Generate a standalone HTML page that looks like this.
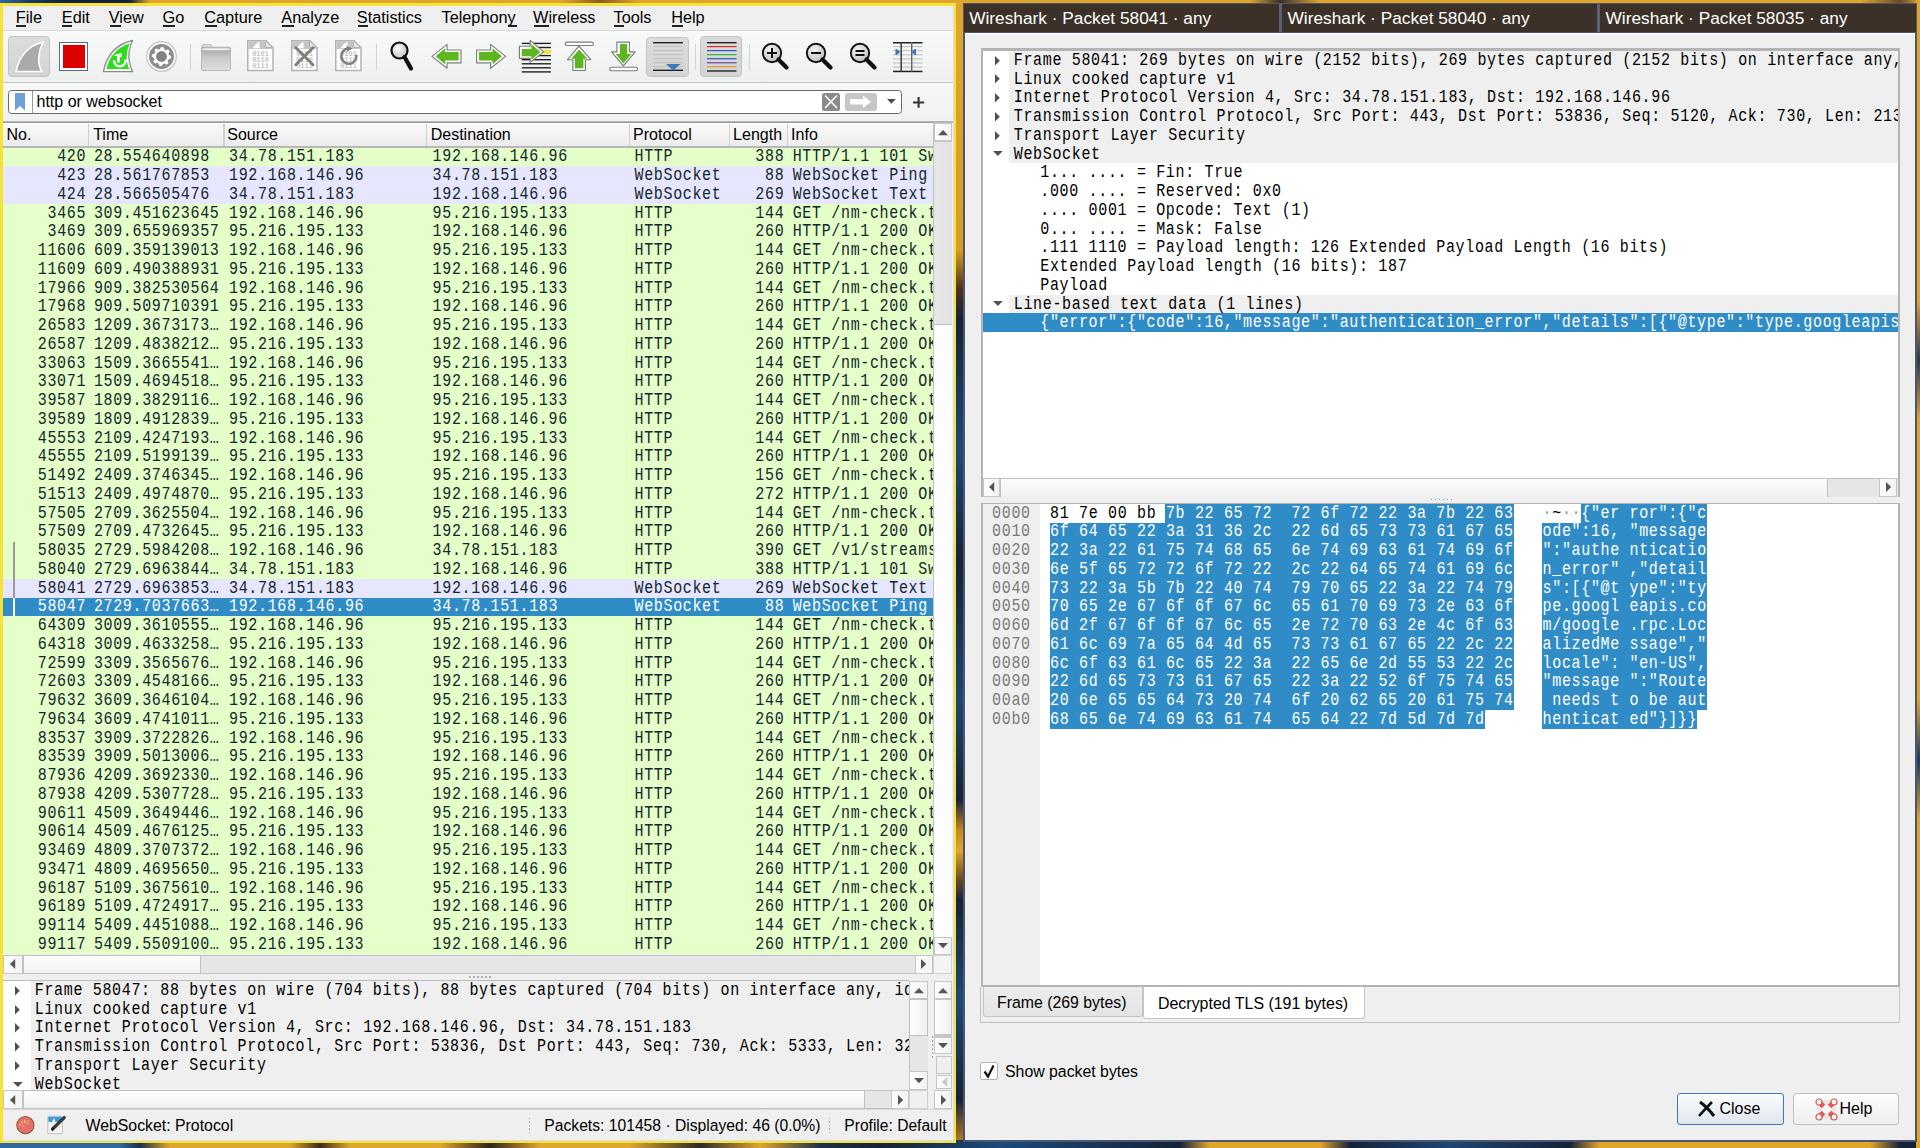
<!DOCTYPE html><html><head><meta charset="utf-8"><style>
*{margin:0;padding:0;box-sizing:border-box}
html,body{width:1920px;height:1148px;overflow:hidden}
body{position:relative;background:#1a2a44}
div{position:absolute}
.m{font-family:"Liberation Mono",monospace;font-size:15px;letter-spacing:0.657px;line-height:18.75px;height:18.75px;white-space:pre;color:#000;transform:scaleY(1.2);transform-origin:0 0}
.s{font-family:"Liberation Sans",sans-serif;font-size:16px;line-height:20px;height:20px;white-space:pre;color:#000}
</style></head><body><div style="left:0px;top:0px;width:1920px;height:1148px;background:#16223a"></div><div style="left:0px;top:0px;width:1920px;height:4px;background:linear-gradient(90deg,#2f6aa6 0px,#1b3c66 28px,#16223a 60px,#16223a 130px,#e0a62c 150px,#e0a62c 560px,#8a5a20 600px,#e0a62c 640px,#e0a62c 1250px,#3a3024 1280px,#e0a62c 1320px,#e0a62c 1860px,#6a4a20 1900px,#e0a62c 1920px)"></div><div style="left:953px;top:0px;width:12px;height:1148px;background:linear-gradient(180deg,#e0a62c 0px,#d89a26 250px,#4a3018 290px,#16223a 320px,#1d4a78 450px,#16223a 560px,#1e4670 700px,#16223a 800px,#c8841e 830px,#e0a62c 850px,#6a4a20 880px,#16223a 900px,#1c4a76 1000px,#16223a 1100px,#b07a20 1140px)"></div><div style="left:0px;top:1140px;width:1920px;height:8px;background:linear-gradient(90deg,#2f6aa6 0px,#2f6aa6 120px,#1b3050 140px,#e0a62c 170px,#e0a62c 290px,#3a2c1c 320px,#e0a62c 350px,#e0a62c 440px,#2a2420 490px,#e0a62c 540px,#e0a62c 630px,#2a2a2a 700px,#e0a62c 760px,#1c3050 820px,#16223a 880px,#1d4a78 1000px,#16223a 1180px,#e0a62c 1210px,#e0a62c 1320px,#16223a 1350px,#1e4670 1450px,#16223a 1570px,#e0a62c 1600px,#e0a62c 1870px,#16223a 1900px)"></div><div style="left:1916px;top:0px;width:4px;height:1148px;background:linear-gradient(180deg,#e0a62c 0px,#e0a62c 300px,#2a3a50 360px,#e0a62c 420px,#e0a62c 700px,#1c3a60 760px,#e0a62c 820px,#e0a62c 1148px)"></div><div style="left:0px;top:3px;width:956px;height:1140px;background:#f4e43a"></div><div style="left:2.5px;top:5.5px;width:951px;height:1135px;background:#dcdcec"></div><div style="left:3px;top:6px;width:950px;height:1134px;overflow:hidden;background:#efefef"><div class="s" style="left:12.8px;top:0.6px;font-size:16.3px">File</div><div class="s" style="left:58.8px;top:0.6px;font-size:16.3px">Edit</div><div class="s" style="left:105.8px;top:0.6px;font-size:16.3px">View</div><div class="s" style="left:159.55px;top:0.6px;font-size:16.3px">Go</div><div class="s" style="left:201.3px;top:0.6px;font-size:16.3px">Capture</div><div class="s" style="left:278.3px;top:0.6px;font-size:16.3px">Analyze</div><div class="s" style="left:353.8px;top:0.6px;font-size:16.3px">Statistics</div><div class="s" style="left:438.5px;top:0.6px;font-size:16.3px">Telephony</div><div class="s" style="left:530.1px;top:0.6px;font-size:16.3px">Wireless</div><div class="s" style="left:610.5px;top:0.6px;font-size:16.3px">Tools</div><div class="s" style="left:668.2px;top:0.6px;font-size:16.3px">Help</div><div style="left:0px;top:24px;width:950px;height:1px;background:#d9d9d9"></div><div style="left:12.9px;top:19.4px;width:9.7px;height:1.4px;background:#222"></div><div style="left:58.6px;top:19.4px;width:10.9px;height:1.4px;background:#222"></div><div style="left:106.5px;top:19.4px;width:11px;height:1.4px;background:#222"></div><div style="left:160px;top:19.4px;width:12.4px;height:1.4px;background:#222"></div><div style="left:202px;top:19.4px;width:11.5px;height:1.4px;background:#222"></div><div style="left:279px;top:19.4px;width:11.5px;height:1.4px;background:#222"></div><div style="left:354.5px;top:19.4px;width:10.5px;height:1.4px;background:#222"></div><div style="left:505px;top:19.4px;width:8.5px;height:1.4px;background:#222"></div><div style="left:530.5px;top:19.4px;width:15px;height:1.4px;background:#222"></div><div style="left:611px;top:19.4px;width:10px;height:1.4px;background:#222"></div><div style="left:668.5px;top:19.4px;width:11.5px;height:1.4px;background:#222"></div><div style="left:0px;top:25px;width:950px;height:51px;background:linear-gradient(#f8f9f9,#eef0f0)"></div><div style="left:0px;top:76px;width:950px;height:1px;background:#c6c6c6"></div><div style="left:5.3px;top:30.3px;width:42.2px;height:40.7px;background:linear-gradient(#dcdcdc,#d4d4d4);border:1px solid #c2c2c2;border-radius:4px"></div><div style="left:643.3px;top:30.7px;width:42.4px;height:40.7px;background:linear-gradient(#dcdcdc,#d4d4d4);border:1px solid #c2c2c2;border-radius:4px"></div><div style="left:697.2px;top:30.4px;width:42.3px;height:41px;background:linear-gradient(#dcdcdc,#d4d4d4);border:1px solid #c2c2c2;border-radius:4px"></div><div style="left:187px;top:38px;width:1px;height:26px;background:#d2d2d2"></div><div style="left:373px;top:38px;width:1px;height:26px;background:#d2d2d2"></div><div style="left:692px;top:38px;width:1px;height:26px;background:#d2d2d2"></div><div style="left:745.9px;top:38px;width:1px;height:26px;background:#d2d2d2"></div><svg style="position:absolute;left:12px;top:34.5px;overflow:visible;" width="30" height="32" viewBox="0 0 30 32"><path d="M1,30.5 C4,16 13,5 28,1 C23,11 22,23 27,30.5 Z" fill="#aaaaaa" stroke="#ffffff" stroke-width="1.6"/></svg><div style="left:56px;top:36px;width:29px;height:28.7px;background:#fff;border:1.2px solid #5e6c80"></div><div style="left:59.5px;top:39.2px;width:22.4px;height:22.4px;background:#dd0000"></div><svg style="position:absolute;left:95px;top:30px;overflow:visible;" width="40" height="40" viewBox="0 0 40 40"><path d="M5.5,35.6 C8,20 18,8 34.6,4.5 C31,11 30,20 31.5,26 C32,30 33.5,33 34.6,35.6 Z" fill="#fff" stroke="#8a8a8a" stroke-width="1.3" stroke-linejoin="round"/><path d="M8.5,33 C11,21 19,11 32,7.3 C28.5,14 28,22 29.5,28 C30,30 30.5,31.5 31.5,33 Z" fill="#2ddc1a"/><path d="M16,24.5 A5.8,5.8 0 1 0 27.5,23.5" fill="none" stroke="#fff" stroke-width="2.4"/><path d="M20.4,18.5 L20.4,26.5" stroke="#fff" stroke-width="2.8"/><polygon points="15.2,19.2 23.6,16.8 23.6,21.2" fill="#fff"/></svg><svg style="position:absolute;left:143.3px;top:34.5px;overflow:visible;" width="31" height="31" viewBox="0 0 31 31"><circle cx="15.5" cy="15.5" r="14.8" fill="#f8f8f8" stroke="#c4c4c4" stroke-width="1.2"/><circle cx="15.5" cy="15.5" r="12.4" fill="#8c8c8c"/><polygon points="15.50,6.10 17.33,6.28 18.29,8.76 19.56,9.43 22.15,8.85 23.32,10.28 22.24,12.71 22.66,14.08 24.90,15.50 24.72,17.33 22.24,18.29 21.57,19.56 22.15,22.15 20.72,23.32 18.29,22.24 16.92,22.66 15.50,24.90 13.67,24.72 12.71,22.24 11.44,21.57 8.85,22.15 7.68,20.72 8.76,18.29 8.34,16.92 6.10,15.50 6.28,13.67 8.76,12.71 9.43,11.44 8.85,8.85 10.28,7.68 12.71,8.76 14.08,8.34" fill="#ffffff" stroke="#ffffff" stroke-width="0.6" stroke-linejoin="round"/><circle cx="15.5" cy="15.5" r="5.4" fill="#828282"/></svg><svg style="position:absolute;left:198px;top:38px;overflow:visible;" width="30" height="27" viewBox="0 0 30 27"><defs><linearGradient id="fg" x1="0" y1="0" x2="0" y2="1"><stop offset="0" stop-color="#a6a6a6"/><stop offset="0.55" stop-color="#cfcfcf"/><stop offset="1" stop-color="#dedede"/></linearGradient></defs><path d="M1,3.5 L1,1.5 Q1,0.5 2,0.5 L10,0.5 L11,2.5 L11,3.5 Z" fill="#dcdcdc" stroke="#bdbdbd" stroke-width="1"/><rect x="0.5" y="3.2" width="29" height="23.3" rx="1" fill="url(#fg)" stroke="#b8b8b8" stroke-width="1"/><rect x="1.5" y="4.2" width="27" height="2" fill="#eeeeee"/></svg><svg style="position:absolute;left:243.9px;top:34.4px;overflow:visible;" width="27" height="32" viewBox="0 0 27 32"><path d="M0.75,0.75 L19,0.75 L26,7.5 L26,30.6 L0.75,30.6 Z" fill="#fff" stroke="#b2b2b2" stroke-width="1.5"/><path d="M1.5,1.5 L18.5,1.5 L25,7.5 L25,9 L1.5,9 Z" fill="#c4c4c4"/><path d="M18.5,1.5 L18.5,7.5 L25,7.5" fill="#e6e6e6" stroke="#b2b2b2" stroke-width="1"/><path d="M6,8.2 C7.5,5 9.5,3 12.6,2 L12.6,8.2 Z" fill="#fff"/><text x="5.2" y="16.3" font-family="Liberation Mono" font-size="6.6" font-weight="bold" fill="#c4c4c4" textLength="16.6" lengthAdjust="spacingAndGlyphs" transform="scale(1,1)">0101</text><text x="5.2" y="22.2" font-family="Liberation Mono" font-size="6.6" font-weight="bold" fill="#c4c4c4" textLength="16.6" lengthAdjust="spacingAndGlyphs" transform="scale(1,1)">0110</text><text x="5.2" y="28" font-family="Liberation Mono" font-size="6.6" font-weight="bold" fill="#c4c4c4" textLength="16.6" lengthAdjust="spacingAndGlyphs" transform="scale(1,1)">0111</text></svg><svg style="position:absolute;left:288px;top:34.4px;overflow:visible;" width="27" height="32" viewBox="0 0 27 32"><path d="M0.75,0.75 L19,0.75 L26,7.5 L26,30.6 L0.75,30.6 Z" fill="#fff" stroke="#b2b2b2" stroke-width="1.5"/><path d="M1.5,1.5 L18.5,1.5 L25,7.5 L25,9 L1.5,9 Z" fill="#c4c4c4"/><path d="M18.5,1.5 L18.5,7.5 L25,7.5" fill="#e6e6e6" stroke="#b2b2b2" stroke-width="1"/><path d="M6,8.2 C7.5,5 9.5,3 12.6,2 L12.6,8.2 Z" fill="#fff"/><text x="5.2" y="16.3" font-family="Liberation Mono" font-size="6.6" font-weight="bold" fill="#c4c4c4" textLength="16.6" lengthAdjust="spacingAndGlyphs" transform="scale(1,1)">0101</text><text x="5.2" y="22.2" font-family="Liberation Mono" font-size="6.6" font-weight="bold" fill="#c4c4c4" textLength="16.6" lengthAdjust="spacingAndGlyphs" transform="scale(1,1)">0110</text><text x="5.2" y="28" font-family="Liberation Mono" font-size="6.6" font-weight="bold" fill="#c4c4c4" textLength="16.6" lengthAdjust="spacingAndGlyphs" transform="scale(1,1)">0111</text><path d="M4.8,7.8 L22,24.8 M22,7.8 L4.8,24.8" stroke="#7c807a" stroke-width="2.9" stroke-linecap="round"/></svg><svg style="position:absolute;left:332px;top:34.4px;overflow:visible;" width="27" height="32" viewBox="0 0 27 32"><path d="M0.75,0.75 L19,0.75 L26,7.5 L26,30.6 L0.75,30.6 Z" fill="#fff" stroke="#b2b2b2" stroke-width="1.5"/><path d="M1.5,1.5 L18.5,1.5 L25,7.5 L25,9 L1.5,9 Z" fill="#c4c4c4"/><path d="M18.5,1.5 L18.5,7.5 L25,7.5" fill="#e6e6e6" stroke="#b2b2b2" stroke-width="1"/><path d="M6,8.2 C7.5,5 9.5,3 12.6,2 L12.6,8.2 Z" fill="#fff"/><text x="5.2" y="16.3" font-family="Liberation Mono" font-size="6.6" font-weight="bold" fill="#c4c4c4" textLength="16.6" lengthAdjust="spacingAndGlyphs" transform="scale(1,1)">0101</text><text x="5.2" y="22.2" font-family="Liberation Mono" font-size="6.6" font-weight="bold" fill="#c4c4c4" textLength="16.6" lengthAdjust="spacingAndGlyphs" transform="scale(1,1)">0110</text><text x="5.2" y="28" font-family="Liberation Mono" font-size="6.6" font-weight="bold" fill="#c4c4c4" textLength="16.6" lengthAdjust="spacingAndGlyphs" transform="scale(1,1)">0111</text><path d="M13.5,8.6 A7.6,7.6 0 1 0 21.3,14.8" fill="none" stroke="#7c807a" stroke-width="2.5"/><polygon points="11.5,5.8 17.6,8.4 12,11.8" fill="#7c807a"/></svg><svg style="position:absolute;left:387px;top:35px;overflow:visible;" width="24" height="31" viewBox="0 0 24 31"><defs><radialGradient id="lg" cx="0.4" cy="0.35" r="0.7"><stop offset="0" stop-color="#fafafa"/><stop offset="1" stop-color="#c2c2c2"/></radialGradient></defs><circle cx="9.5" cy="9.5" r="8" fill="url(#lg)" stroke="#111" stroke-width="2.2"/><path d="M14.5,16 L21,27.5" stroke="#111" stroke-width="4.2" stroke-linecap="round"/></svg><svg style="position:absolute;left:-3px;top:-6px;overflow:visible;" width="960" height="90" viewBox="0 0 960 90"><polygon points="432.00,56.40 447.00,44.40 447.00,50.00 461.00,50.00 461.00,62.80 447.00,62.80 447.00,68.30" fill="#ffffff" stroke="#7c7c7c" stroke-width="1.15" stroke-linejoin="round"/><polygon points="435.70,56.30 445.10,48.30 445.10,52.10 458.60,52.10 458.60,60.40 445.10,60.40 445.10,64.40" fill="#5db51f"/><polygon points="505.60,56.40 490.60,44.40 490.60,50.00 476.60,50.00 476.60,62.80 490.60,62.80 490.60,68.30" fill="#ffffff" stroke="#7c7c7c" stroke-width="1.15" stroke-linejoin="round"/><polygon points="501.90,56.30 492.50,48.30 492.50,52.10 479.00,52.10 479.00,60.40 492.50,60.40 492.50,64.40" fill="#5db51f"/><rect x="521.8" y="42.70" width="29.1" height="1.4" fill="#222"/><rect x="521.8" y="46.80" width="29.1" height="1.4" fill="#222"/><rect x="521.8" y="54.90" width="29.1" height="1.4" fill="#222"/><rect x="521.8" y="59.00" width="29.1" height="1.4" fill="#222"/><rect x="521.8" y="63.10" width="29.1" height="1.4" fill="#222"/><rect x="521.8" y="67.10" width="29.1" height="1.4" fill="#222"/><rect x="521.8" y="71.20" width="29.1" height="1.4" fill="#222"/><rect x="521.8" y="51.3" width="29.1" height="1.4" fill="#222"/><rect x="541" y="49.9" width="9.9" height="3.7" fill="#f2e22e"/><polygon points="543.50,51.90 530.20,40.40 530.20,46.20 519.40,46.20 519.40,58.30 530.20,58.30 530.20,62.40" fill="#ffffff" stroke="#7c7c7c" stroke-width="1.15" stroke-linejoin="round"/><polygon points="540.40,51.90 531.30,44.10 531.30,48.90 521.80,48.90 521.80,56.30 531.30,56.30 531.30,60.00" fill="#5db51f"/><rect x="565.3" y="42.1" width="28.1" height="3.4" rx="1.7" fill="#fff" stroke="#7c7c7c" stroke-width="1.1"/><polygon points="579.00,46.20 590.80,59.70 585.40,59.70 585.40,70.50 572.90,70.50 572.90,59.70 567.50,59.70" fill="#ffffff" stroke="#7c7c7c" stroke-width="1.15" stroke-linejoin="round"/><polygon points="579.00,49.50 587.50,58.70 583.40,58.70 583.40,68.20 574.90,68.20 574.90,58.70 571.20,58.70" fill="#5db51f"/><rect x="609.6" y="67.3" width="28" height="3.4" rx="1.7" fill="#fff" stroke="#7c7c7c" stroke-width="1.1"/><polygon points="616.90,42.10 629.40,42.10 629.40,51.90 635.20,51.90 623.30,65.80 611.50,51.90 616.90,51.90" fill="#ffffff" stroke="#7c7c7c" stroke-width="1.15" stroke-linejoin="round"/><polygon points="620.00,44.10 627.10,44.10 627.10,53.90 631.50,53.90 623.30,63.40 615.60,53.90 620.00,53.90" fill="#5db51f"/></svg><svg style="position:absolute;left:650px;top:35.7px;overflow:visible;" width="30" height="30" viewBox="0 0 30 30"><rect x="0" y="0" width="30" height="1.4" fill="#222"/><rect x="0" y="4.05" width="30" height="1" fill="#bcbcbc"/><rect x="0" y="8.10" width="30" height="1" fill="#bcbcbc"/><rect x="0" y="12.15" width="30" height="1" fill="#bcbcbc"/><rect x="0" y="16.20" width="30" height="1" fill="#bcbcbc"/><rect x="0" y="20.25" width="30" height="1" fill="#bcbcbc"/><rect x="0" y="24.30" width="30" height="1" fill="#bcbcbc"/><rect x="0" y="27.6" width="30" height="1.4" fill="#222"/><path d="M13,22 L27.5,22 L20.2,28.5 Z" fill="#3f77b8"/></svg><svg style="position:absolute;left:703.5px;top:35.7px;overflow:visible;" width="30" height="30" viewBox="0 0 30 30"><rect x="0" y="0.00" width="29.5" height="1.4" fill="#222"/><rect x="0" y="4.04" width="29.5" height="1.15" fill="#e02020"/><rect x="0" y="8.08" width="29.5" height="1.15" fill="#2050c0"/><rect x="0" y="12.12" width="29.5" height="1.15" fill="#30b030"/><rect x="0" y="16.16" width="29.5" height="1.15" fill="#2050c0"/><rect x="0" y="20.20" width="29.5" height="1.15" fill="#704090"/><rect x="0" y="24.24" width="29.5" height="1.15" fill="#e09020"/><rect x="0" y="28.28" width="29.5" height="1.4" fill="#222"/></svg><svg style="position:absolute;left:758.6px;top:37px;overflow:visible;" width="27" height="27" viewBox="0 0 27 27"><defs><radialGradient id="zg771" cx="0.4" cy="0.35" r="0.7"><stop offset="0" stop-color="#f4f4f4"/><stop offset="1" stop-color="#bdbdbd"/></radialGradient></defs><circle cx="10" cy="10" r="9.2" fill="url(#zg771)" stroke="#111" stroke-width="1.9"/><path d="M16.5,16.5 L24.5,24.5" stroke="#111" stroke-width="4.2" stroke-linecap="round"/><path d="M5,10 L15,10 M10,5 L10,15" stroke="#111" stroke-width="2"/></svg><svg style="position:absolute;left:803px;top:37px;overflow:visible;" width="27" height="27" viewBox="0 0 27 27"><defs><radialGradient id="zg816" cx="0.4" cy="0.35" r="0.7"><stop offset="0" stop-color="#f4f4f4"/><stop offset="1" stop-color="#bdbdbd"/></radialGradient></defs><circle cx="10" cy="10" r="9.2" fill="url(#zg816)" stroke="#111" stroke-width="1.9"/><path d="M16.5,16.5 L24.5,24.5" stroke="#111" stroke-width="4.2" stroke-linecap="round"/><path d="M5,10 L15,10" stroke="#111" stroke-width="2"/></svg><svg style="position:absolute;left:847px;top:37px;overflow:visible;" width="27" height="27" viewBox="0 0 27 27"><defs><radialGradient id="zg860" cx="0.4" cy="0.35" r="0.7"><stop offset="0" stop-color="#f4f4f4"/><stop offset="1" stop-color="#bdbdbd"/></radialGradient></defs><circle cx="10" cy="10" r="9.2" fill="url(#zg860)" stroke="#111" stroke-width="1.9"/><path d="M16.5,16.5 L24.5,24.5" stroke="#111" stroke-width="4.2" stroke-linecap="round"/><path d="M5.5,8 L14.5,8 M5.5,12 L14.5,12" stroke="#111" stroke-width="1.8"/></svg><svg style="position:absolute;left:890px;top:35.5px;overflow:visible;" width="30" height="30" viewBox="0 0 30 30"><rect x="0" y="0.00" width="29.5" height="1.5" fill="#222"/><rect x="0" y="4.10" width="29.5" height="1" fill="#bcbcbc"/><rect x="0" y="8.20" width="29.5" height="1" fill="#bcbcbc"/><rect x="0" y="12.30" width="29.5" height="1" fill="#bcbcbc"/><rect x="0" y="16.40" width="29.5" height="1" fill="#bcbcbc"/><rect x="0" y="20.50" width="29.5" height="1" fill="#bcbcbc"/><rect x="0" y="24.60" width="29.5" height="1" fill="#bcbcbc"/><rect x="0" y="28.70" width="29.5" height="1.5" fill="#222"/><rect x="7.5" y="0" width="1.4" height="29.5" fill="#333"/><rect x="18" y="0" width="1.4" height="29.5" fill="#666"/><path d="M3.5,7 L7.5,10 L3.5,13 Z M22,7 L18,10 L22,13 Z" fill="#3f77b8"/><rect x="2.5" y="7" width="1.5" height="6" fill="#3f77b8"/><rect x="21.5" y="7" width="1.5" height="6" fill="#3f77b8"/></svg><div style="left:0px;top:77px;width:950px;height:38px;background:linear-gradient(#f6f7f7,#f0f1f1)"></div><div style="left:0px;top:115px;width:950px;height:1.5px;background:#b4b4b4"></div><div style="left:5.3px;top:84.3px;width:893.5px;height:23.3px;background:#fff;border:1.2px solid #6a6a6a;border-radius:3.5px"></div><div style="left:28.8px;top:85.3px;width:1.2px;height:21.3px;background:#9a9a9a"></div><svg style="position:absolute;left:12px;top:87px;overflow:visible;" width="10.5" height="18" viewBox="0 0 10.5 18"><path d="M0,0 L10,0 L10,17.5 L5,13 L0,17.5 Z" fill="#6e9fd6"/></svg><div class="s" style="left:33.5px;top:86px;">http or websocket</div><div style="left:819.2px;top:87.1px;width:18.1px;height:17.6px;background:#8a8a8a;border-radius:2.5px"></div><svg style="position:absolute;left:819.2px;top:87.1px;overflow:visible;" width="18.1" height="17.6" viewBox="0 0 18.1 17.6"><path d="M3,2.5 L15,15 M15,2.5 L3,15" stroke="#fff" stroke-width="1.6"/></svg><div style="left:842.2px;top:87.1px;width:31.5px;height:17.6px;background:#c6c6c6;border-radius:3px"></div><svg style="position:absolute;left:842.2px;top:87.1px;overflow:visible;" width="31.5" height="17.6" viewBox="0 0 31.5 17.6"><path d="M5,6 L18,6 L18,2.5 L26,9 L18,15 L18,11.5 L5,11.5 Z" fill="#fff"/></svg><svg style="position:absolute;left:884.2px;top:93.2px;overflow:visible;" width="8.8" height="4.8" viewBox="0 0 8.8 4.8"><polygon points="0,0 8.8,0 4.4,4.8" fill="#505050"/></svg><svg style="position:absolute;left:909.9px;top:90.9px;overflow:visible;" width="11.5" height="11" viewBox="0 0 11.5 11"><path d="M0,5.5 L11.2,5.5 M5.6,0 L5.6,10.8" stroke="#333" stroke-width="2.1"/></svg><div style="left:0px;top:115.5px;width:930.3px;height:1.3px;background:#9e9e9e"></div><div style="left:0px;top:116.8px;width:930.3px;height:23.4px;background:linear-gradient(#fafafa,#ececec)"></div><div style="left:0px;top:140px;width:930.3px;height:1.5px;background:#b8b8b8"></div><div style="left:84.7px;top:117.5px;width:1.2px;height:22.5px;background:#d0d0d0"></div><div style="left:220.4px;top:117.5px;width:1.2px;height:22.5px;background:#d0d0d0"></div><div style="left:423.2px;top:117.5px;width:1.2px;height:22.5px;background:#d0d0d0"></div><div style="left:625.6px;top:117.5px;width:1.2px;height:22.5px;background:#d0d0d0"></div><div style="left:726.2px;top:117.5px;width:1.2px;height:22.5px;background:#d0d0d0"></div><div style="left:783.7px;top:117.5px;width:1.2px;height:22.5px;background:#d0d0d0"></div><div class="s" style="left:3.5px;top:119.3px;">No.</div><div class="s" style="left:90.2px;top:119.3px;">Time</div><div class="s" style="left:224.3px;top:119.3px;">Source</div><div class="s" style="left:427.7px;top:119.3px;">Destination</div><div class="s" style="left:630.1px;top:119.3px;">Protocol</div><div class="s" style="left:730.1px;top:119.3px;">Length</div><div class="s" style="left:788.1px;top:119.3px;">Info</div><div style="left:0px;top:141.7px;width:930.3px;height:807.5px;overflow:hidden;"><div style="left:0px;top:0px;width:930.3px;height:18.8px;background:#e4ffc7"></div><div class="m" style="left:54.13px;top:-0.4px;color:#12272e">420</div><div class="m" style="left:90.9px;top:-0.4px;color:#12272e">28.554640898</div><div class="m" style="left:226px;top:-0.4px;color:#12272e">34.78.151.183</div><div class="m" style="left:429.6px;top:-0.4px;color:#12272e">192.168.146.96</div><div class="m" style="left:631.5px;top:-0.4px;color:#12272e">HTTP</div><div class="m" style="left:752.33px;top:-0.4px;color:#12272e">388</div><div class="m" style="left:789.7px;top:-0.4px;color:#12272e">HTTP/1.1 101 Switching Protocols</div><div style="left:0px;top:18.75px;width:930.3px;height:18.8px;background:#e7e6ff"></div><div class="m" style="left:54.13px;top:18.35px;color:#12272e">423</div><div class="m" style="left:90.9px;top:18.35px;color:#12272e">28.561767853</div><div class="m" style="left:226px;top:18.35px;color:#12272e">192.168.146.96</div><div class="m" style="left:429.6px;top:18.35px;color:#12272e">34.78.151.183</div><div class="m" style="left:631.5px;top:18.35px;color:#12272e">WebSocket</div><div class="m" style="left:761.98px;top:18.35px;color:#12272e">88</div><div class="m" style="left:789.7px;top:18.35px;color:#12272e">WebSocket Ping [FIN]</div><div style="left:0px;top:37.5px;width:930.3px;height:18.8px;background:#e7e6ff"></div><div class="m" style="left:54.13px;top:37.1px;color:#12272e">424</div><div class="m" style="left:90.9px;top:37.1px;color:#12272e">28.566505476</div><div class="m" style="left:226px;top:37.1px;color:#12272e">34.78.151.183</div><div class="m" style="left:429.6px;top:37.1px;color:#12272e">192.168.146.96</div><div class="m" style="left:631.5px;top:37.1px;color:#12272e">WebSocket</div><div class="m" style="left:752.33px;top:37.1px;color:#12272e">269</div><div class="m" style="left:789.7px;top:37.1px;color:#12272e">WebSocket Text [FIN]</div><div style="left:0px;top:56.25px;width:930.3px;height:18.8px;background:#e4ffc7"></div><div class="m" style="left:44.47px;top:55.85px;color:#12272e">3465</div><div class="m" style="left:90.9px;top:55.85px;color:#12272e">309.451623645</div><div class="m" style="left:226px;top:55.85px;color:#12272e">192.168.146.96</div><div class="m" style="left:429.6px;top:55.85px;color:#12272e">95.216.195.133</div><div class="m" style="left:631.5px;top:55.85px;color:#12272e">HTTP</div><div class="m" style="left:752.33px;top:55.85px;color:#12272e">144</div><div class="m" style="left:789.7px;top:55.85px;color:#12272e">GET /nm-check.txt HTTP/1.1</div><div style="left:0px;top:75px;width:930.3px;height:18.8px;background:#e4ffc7"></div><div class="m" style="left:44.47px;top:74.6px;color:#12272e">3469</div><div class="m" style="left:90.9px;top:74.6px;color:#12272e">309.655969357</div><div class="m" style="left:226px;top:74.6px;color:#12272e">95.216.195.133</div><div class="m" style="left:429.6px;top:74.6px;color:#12272e">192.168.146.96</div><div class="m" style="left:631.5px;top:74.6px;color:#12272e">HTTP</div><div class="m" style="left:752.33px;top:74.6px;color:#12272e">260</div><div class="m" style="left:789.7px;top:74.6px;color:#12272e">HTTP/1.1 200 OK (text/plain)</div><div style="left:0px;top:93.75px;width:930.3px;height:18.8px;background:#e4ffc7"></div><div class="m" style="left:34.81px;top:93.35px;color:#12272e">11606</div><div class="m" style="left:90.9px;top:93.35px;color:#12272e">609.359139013</div><div class="m" style="left:226px;top:93.35px;color:#12272e">192.168.146.96</div><div class="m" style="left:429.6px;top:93.35px;color:#12272e">95.216.195.133</div><div class="m" style="left:631.5px;top:93.35px;color:#12272e">HTTP</div><div class="m" style="left:752.33px;top:93.35px;color:#12272e">144</div><div class="m" style="left:789.7px;top:93.35px;color:#12272e">GET /nm-check.txt HTTP/1.1</div><div style="left:0px;top:112.5px;width:930.3px;height:18.8px;background:#e4ffc7"></div><div class="m" style="left:34.81px;top:112.1px;color:#12272e">11609</div><div class="m" style="left:90.9px;top:112.1px;color:#12272e">609.490388931</div><div class="m" style="left:226px;top:112.1px;color:#12272e">95.216.195.133</div><div class="m" style="left:429.6px;top:112.1px;color:#12272e">192.168.146.96</div><div class="m" style="left:631.5px;top:112.1px;color:#12272e">HTTP</div><div class="m" style="left:752.33px;top:112.1px;color:#12272e">260</div><div class="m" style="left:789.7px;top:112.1px;color:#12272e">HTTP/1.1 200 OK (text/plain)</div><div style="left:0px;top:131.25px;width:930.3px;height:18.8px;background:#e4ffc7"></div><div class="m" style="left:34.81px;top:130.85px;color:#12272e">17966</div><div class="m" style="left:90.9px;top:130.85px;color:#12272e">909.382530564</div><div class="m" style="left:226px;top:130.85px;color:#12272e">192.168.146.96</div><div class="m" style="left:429.6px;top:130.85px;color:#12272e">95.216.195.133</div><div class="m" style="left:631.5px;top:130.85px;color:#12272e">HTTP</div><div class="m" style="left:752.33px;top:130.85px;color:#12272e">144</div><div class="m" style="left:789.7px;top:130.85px;color:#12272e">GET /nm-check.txt HTTP/1.1</div><div style="left:0px;top:150px;width:930.3px;height:18.8px;background:#e4ffc7"></div><div class="m" style="left:34.81px;top:149.6px;color:#12272e">17968</div><div class="m" style="left:90.9px;top:149.6px;color:#12272e">909.509710391</div><div class="m" style="left:226px;top:149.6px;color:#12272e">95.216.195.133</div><div class="m" style="left:429.6px;top:149.6px;color:#12272e">192.168.146.96</div><div class="m" style="left:631.5px;top:149.6px;color:#12272e">HTTP</div><div class="m" style="left:752.33px;top:149.6px;color:#12272e">260</div><div class="m" style="left:789.7px;top:149.6px;color:#12272e">HTTP/1.1 200 OK (text/plain)</div><div style="left:0px;top:168.75px;width:930.3px;height:18.8px;background:#e4ffc7"></div><div class="m" style="left:34.81px;top:168.35px;color:#12272e">26583</div><div class="m" style="left:90.9px;top:168.35px;color:#12272e">1209.3673173…</div><div class="m" style="left:226px;top:168.35px;color:#12272e">192.168.146.96</div><div class="m" style="left:429.6px;top:168.35px;color:#12272e">95.216.195.133</div><div class="m" style="left:631.5px;top:168.35px;color:#12272e">HTTP</div><div class="m" style="left:752.33px;top:168.35px;color:#12272e">144</div><div class="m" style="left:789.7px;top:168.35px;color:#12272e">GET /nm-check.txt HTTP/1.1</div><div style="left:0px;top:187.5px;width:930.3px;height:18.8px;background:#e4ffc7"></div><div class="m" style="left:34.81px;top:187.1px;color:#12272e">26587</div><div class="m" style="left:90.9px;top:187.1px;color:#12272e">1209.4838212…</div><div class="m" style="left:226px;top:187.1px;color:#12272e">95.216.195.133</div><div class="m" style="left:429.6px;top:187.1px;color:#12272e">192.168.146.96</div><div class="m" style="left:631.5px;top:187.1px;color:#12272e">HTTP</div><div class="m" style="left:752.33px;top:187.1px;color:#12272e">260</div><div class="m" style="left:789.7px;top:187.1px;color:#12272e">HTTP/1.1 200 OK (text/plain)</div><div style="left:0px;top:206.25px;width:930.3px;height:18.8px;background:#e4ffc7"></div><div class="m" style="left:34.81px;top:205.85px;color:#12272e">33063</div><div class="m" style="left:90.9px;top:205.85px;color:#12272e">1509.3665541…</div><div class="m" style="left:226px;top:205.85px;color:#12272e">192.168.146.96</div><div class="m" style="left:429.6px;top:205.85px;color:#12272e">95.216.195.133</div><div class="m" style="left:631.5px;top:205.85px;color:#12272e">HTTP</div><div class="m" style="left:752.33px;top:205.85px;color:#12272e">144</div><div class="m" style="left:789.7px;top:205.85px;color:#12272e">GET /nm-check.txt HTTP/1.1</div><div style="left:0px;top:225px;width:930.3px;height:18.8px;background:#e4ffc7"></div><div class="m" style="left:34.81px;top:224.6px;color:#12272e">33071</div><div class="m" style="left:90.9px;top:224.6px;color:#12272e">1509.4694518…</div><div class="m" style="left:226px;top:224.6px;color:#12272e">95.216.195.133</div><div class="m" style="left:429.6px;top:224.6px;color:#12272e">192.168.146.96</div><div class="m" style="left:631.5px;top:224.6px;color:#12272e">HTTP</div><div class="m" style="left:752.33px;top:224.6px;color:#12272e">260</div><div class="m" style="left:789.7px;top:224.6px;color:#12272e">HTTP/1.1 200 OK (text/plain)</div><div style="left:0px;top:243.75px;width:930.3px;height:18.8px;background:#e4ffc7"></div><div class="m" style="left:34.81px;top:243.35px;color:#12272e">39587</div><div class="m" style="left:90.9px;top:243.35px;color:#12272e">1809.3829116…</div><div class="m" style="left:226px;top:243.35px;color:#12272e">192.168.146.96</div><div class="m" style="left:429.6px;top:243.35px;color:#12272e">95.216.195.133</div><div class="m" style="left:631.5px;top:243.35px;color:#12272e">HTTP</div><div class="m" style="left:752.33px;top:243.35px;color:#12272e">144</div><div class="m" style="left:789.7px;top:243.35px;color:#12272e">GET /nm-check.txt HTTP/1.1</div><div style="left:0px;top:262.5px;width:930.3px;height:18.8px;background:#e4ffc7"></div><div class="m" style="left:34.81px;top:262.1px;color:#12272e">39589</div><div class="m" style="left:90.9px;top:262.1px;color:#12272e">1809.4912839…</div><div class="m" style="left:226px;top:262.1px;color:#12272e">95.216.195.133</div><div class="m" style="left:429.6px;top:262.1px;color:#12272e">192.168.146.96</div><div class="m" style="left:631.5px;top:262.1px;color:#12272e">HTTP</div><div class="m" style="left:752.33px;top:262.1px;color:#12272e">260</div><div class="m" style="left:789.7px;top:262.1px;color:#12272e">HTTP/1.1 200 OK (text/plain)</div><div style="left:0px;top:281.25px;width:930.3px;height:18.8px;background:#e4ffc7"></div><div class="m" style="left:34.81px;top:280.85px;color:#12272e">45553</div><div class="m" style="left:90.9px;top:280.85px;color:#12272e">2109.4247193…</div><div class="m" style="left:226px;top:280.85px;color:#12272e">192.168.146.96</div><div class="m" style="left:429.6px;top:280.85px;color:#12272e">95.216.195.133</div><div class="m" style="left:631.5px;top:280.85px;color:#12272e">HTTP</div><div class="m" style="left:752.33px;top:280.85px;color:#12272e">144</div><div class="m" style="left:789.7px;top:280.85px;color:#12272e">GET /nm-check.txt HTTP/1.1</div><div style="left:0px;top:300px;width:930.3px;height:18.8px;background:#e4ffc7"></div><div class="m" style="left:34.81px;top:299.6px;color:#12272e">45555</div><div class="m" style="left:90.9px;top:299.6px;color:#12272e">2109.5199139…</div><div class="m" style="left:226px;top:299.6px;color:#12272e">95.216.195.133</div><div class="m" style="left:429.6px;top:299.6px;color:#12272e">192.168.146.96</div><div class="m" style="left:631.5px;top:299.6px;color:#12272e">HTTP</div><div class="m" style="left:752.33px;top:299.6px;color:#12272e">260</div><div class="m" style="left:789.7px;top:299.6px;color:#12272e">HTTP/1.1 200 OK (text/plain)</div><div style="left:0px;top:318.75px;width:930.3px;height:18.8px;background:#e4ffc7"></div><div class="m" style="left:34.81px;top:318.35px;color:#12272e">51492</div><div class="m" style="left:90.9px;top:318.35px;color:#12272e">2409.3746345…</div><div class="m" style="left:226px;top:318.35px;color:#12272e">192.168.146.96</div><div class="m" style="left:429.6px;top:318.35px;color:#12272e">95.216.195.133</div><div class="m" style="left:631.5px;top:318.35px;color:#12272e">HTTP</div><div class="m" style="left:752.33px;top:318.35px;color:#12272e">156</div><div class="m" style="left:789.7px;top:318.35px;color:#12272e">GET /nm-check.txt HTTP/1.1</div><div style="left:0px;top:337.5px;width:930.3px;height:18.8px;background:#e4ffc7"></div><div class="m" style="left:34.81px;top:337.1px;color:#12272e">51513</div><div class="m" style="left:90.9px;top:337.1px;color:#12272e">2409.4974870…</div><div class="m" style="left:226px;top:337.1px;color:#12272e">95.216.195.133</div><div class="m" style="left:429.6px;top:337.1px;color:#12272e">192.168.146.96</div><div class="m" style="left:631.5px;top:337.1px;color:#12272e">HTTP</div><div class="m" style="left:752.33px;top:337.1px;color:#12272e">272</div><div class="m" style="left:789.7px;top:337.1px;color:#12272e">HTTP/1.1 200 OK (text/plain)</div><div style="left:0px;top:356.25px;width:930.3px;height:18.8px;background:#e4ffc7"></div><div class="m" style="left:34.81px;top:355.85px;color:#12272e">57505</div><div class="m" style="left:90.9px;top:355.85px;color:#12272e">2709.3625504…</div><div class="m" style="left:226px;top:355.85px;color:#12272e">192.168.146.96</div><div class="m" style="left:429.6px;top:355.85px;color:#12272e">95.216.195.133</div><div class="m" style="left:631.5px;top:355.85px;color:#12272e">HTTP</div><div class="m" style="left:752.33px;top:355.85px;color:#12272e">144</div><div class="m" style="left:789.7px;top:355.85px;color:#12272e">GET /nm-check.txt HTTP/1.1</div><div style="left:0px;top:375px;width:930.3px;height:18.8px;background:#e4ffc7"></div><div class="m" style="left:34.81px;top:374.6px;color:#12272e">57509</div><div class="m" style="left:90.9px;top:374.6px;color:#12272e">2709.4732645…</div><div class="m" style="left:226px;top:374.6px;color:#12272e">95.216.195.133</div><div class="m" style="left:429.6px;top:374.6px;color:#12272e">192.168.146.96</div><div class="m" style="left:631.5px;top:374.6px;color:#12272e">HTTP</div><div class="m" style="left:752.33px;top:374.6px;color:#12272e">260</div><div class="m" style="left:789.7px;top:374.6px;color:#12272e">HTTP/1.1 200 OK (text/plain)</div><div style="left:0px;top:393.75px;width:930.3px;height:18.8px;background:#e4ffc7"></div><div class="m" style="left:34.81px;top:393.35px;color:#12272e">58035</div><div class="m" style="left:90.9px;top:393.35px;color:#12272e">2729.5984208…</div><div class="m" style="left:226px;top:393.35px;color:#12272e">192.168.146.96</div><div class="m" style="left:429.6px;top:393.35px;color:#12272e">34.78.151.183</div><div class="m" style="left:631.5px;top:393.35px;color:#12272e">HTTP</div><div class="m" style="left:752.33px;top:393.35px;color:#12272e">390</div><div class="m" style="left:789.7px;top:393.35px;color:#12272e">GET /v1/streams HTTP/1.1</div><div style="left:0px;top:412.5px;width:930.3px;height:18.8px;background:#e4ffc7"></div><div class="m" style="left:34.81px;top:412.1px;color:#12272e">58040</div><div class="m" style="left:90.9px;top:412.1px;color:#12272e">2729.6963844…</div><div class="m" style="left:226px;top:412.1px;color:#12272e">34.78.151.183</div><div class="m" style="left:429.6px;top:412.1px;color:#12272e">192.168.146.96</div><div class="m" style="left:631.5px;top:412.1px;color:#12272e">HTTP</div><div class="m" style="left:752.33px;top:412.1px;color:#12272e">388</div><div class="m" style="left:789.7px;top:412.1px;color:#12272e">HTTP/1.1 101 Switching Protocols</div><div style="left:0px;top:431.25px;width:930.3px;height:18.8px;background:#e7e6ff"></div><div class="m" style="left:34.81px;top:430.85px;color:#12272e">58041</div><div class="m" style="left:90.9px;top:430.85px;color:#12272e">2729.6963853…</div><div class="m" style="left:226px;top:430.85px;color:#12272e">34.78.151.183</div><div class="m" style="left:429.6px;top:430.85px;color:#12272e">192.168.146.96</div><div class="m" style="left:631.5px;top:430.85px;color:#12272e">WebSocket</div><div class="m" style="left:752.33px;top:430.85px;color:#12272e">269</div><div class="m" style="left:789.7px;top:430.85px;color:#12272e">WebSocket Text [FIN]</div><div style="left:0px;top:450px;width:930.3px;height:18.8px;background:#308cc6"></div><div class="m" style="left:34.81px;top:449.6px;color:#ffffff">58047</div><div class="m" style="left:90.9px;top:449.6px;color:#ffffff">2729.7037663…</div><div class="m" style="left:226px;top:449.6px;color:#ffffff">192.168.146.96</div><div class="m" style="left:429.6px;top:449.6px;color:#ffffff">34.78.151.183</div><div class="m" style="left:631.5px;top:449.6px;color:#ffffff">WebSocket</div><div class="m" style="left:761.98px;top:449.6px;color:#ffffff">88</div><div class="m" style="left:789.7px;top:449.6px;color:#ffffff">WebSocket Ping [FIN]</div><div style="left:0px;top:468.75px;width:930.3px;height:18.8px;background:#e4ffc7"></div><div class="m" style="left:34.81px;top:468.35px;color:#12272e">64309</div><div class="m" style="left:90.9px;top:468.35px;color:#12272e">3009.3610555…</div><div class="m" style="left:226px;top:468.35px;color:#12272e">192.168.146.96</div><div class="m" style="left:429.6px;top:468.35px;color:#12272e">95.216.195.133</div><div class="m" style="left:631.5px;top:468.35px;color:#12272e">HTTP</div><div class="m" style="left:752.33px;top:468.35px;color:#12272e">144</div><div class="m" style="left:789.7px;top:468.35px;color:#12272e">GET /nm-check.txt HTTP/1.1</div><div style="left:0px;top:487.5px;width:930.3px;height:18.8px;background:#e4ffc7"></div><div class="m" style="left:34.81px;top:487.1px;color:#12272e">64318</div><div class="m" style="left:90.9px;top:487.1px;color:#12272e">3009.4633258…</div><div class="m" style="left:226px;top:487.1px;color:#12272e">95.216.195.133</div><div class="m" style="left:429.6px;top:487.1px;color:#12272e">192.168.146.96</div><div class="m" style="left:631.5px;top:487.1px;color:#12272e">HTTP</div><div class="m" style="left:752.33px;top:487.1px;color:#12272e">260</div><div class="m" style="left:789.7px;top:487.1px;color:#12272e">HTTP/1.1 200 OK (text/plain)</div><div style="left:0px;top:506.25px;width:930.3px;height:18.8px;background:#e4ffc7"></div><div class="m" style="left:34.81px;top:505.85px;color:#12272e">72599</div><div class="m" style="left:90.9px;top:505.85px;color:#12272e">3309.3565676…</div><div class="m" style="left:226px;top:505.85px;color:#12272e">192.168.146.96</div><div class="m" style="left:429.6px;top:505.85px;color:#12272e">95.216.195.133</div><div class="m" style="left:631.5px;top:505.85px;color:#12272e">HTTP</div><div class="m" style="left:752.33px;top:505.85px;color:#12272e">144</div><div class="m" style="left:789.7px;top:505.85px;color:#12272e">GET /nm-check.txt HTTP/1.1</div><div style="left:0px;top:525px;width:930.3px;height:18.8px;background:#e4ffc7"></div><div class="m" style="left:34.81px;top:524.6px;color:#12272e">72603</div><div class="m" style="left:90.9px;top:524.6px;color:#12272e">3309.4548166…</div><div class="m" style="left:226px;top:524.6px;color:#12272e">95.216.195.133</div><div class="m" style="left:429.6px;top:524.6px;color:#12272e">192.168.146.96</div><div class="m" style="left:631.5px;top:524.6px;color:#12272e">HTTP</div><div class="m" style="left:752.33px;top:524.6px;color:#12272e">260</div><div class="m" style="left:789.7px;top:524.6px;color:#12272e">HTTP/1.1 200 OK (text/plain)</div><div style="left:0px;top:543.75px;width:930.3px;height:18.8px;background:#e4ffc7"></div><div class="m" style="left:34.81px;top:543.35px;color:#12272e">79632</div><div class="m" style="left:90.9px;top:543.35px;color:#12272e">3609.3646104…</div><div class="m" style="left:226px;top:543.35px;color:#12272e">192.168.146.96</div><div class="m" style="left:429.6px;top:543.35px;color:#12272e">95.216.195.133</div><div class="m" style="left:631.5px;top:543.35px;color:#12272e">HTTP</div><div class="m" style="left:752.33px;top:543.35px;color:#12272e">144</div><div class="m" style="left:789.7px;top:543.35px;color:#12272e">GET /nm-check.txt HTTP/1.1</div><div style="left:0px;top:562.5px;width:930.3px;height:18.8px;background:#e4ffc7"></div><div class="m" style="left:34.81px;top:562.1px;color:#12272e">79634</div><div class="m" style="left:90.9px;top:562.1px;color:#12272e">3609.4741011…</div><div class="m" style="left:226px;top:562.1px;color:#12272e">95.216.195.133</div><div class="m" style="left:429.6px;top:562.1px;color:#12272e">192.168.146.96</div><div class="m" style="left:631.5px;top:562.1px;color:#12272e">HTTP</div><div class="m" style="left:752.33px;top:562.1px;color:#12272e">260</div><div class="m" style="left:789.7px;top:562.1px;color:#12272e">HTTP/1.1 200 OK (text/plain)</div><div style="left:0px;top:581.25px;width:930.3px;height:18.8px;background:#e4ffc7"></div><div class="m" style="left:34.81px;top:580.85px;color:#12272e">83537</div><div class="m" style="left:90.9px;top:580.85px;color:#12272e">3909.3722826…</div><div class="m" style="left:226px;top:580.85px;color:#12272e">192.168.146.96</div><div class="m" style="left:429.6px;top:580.85px;color:#12272e">95.216.195.133</div><div class="m" style="left:631.5px;top:580.85px;color:#12272e">HTTP</div><div class="m" style="left:752.33px;top:580.85px;color:#12272e">144</div><div class="m" style="left:789.7px;top:580.85px;color:#12272e">GET /nm-check.txt HTTP/1.1</div><div style="left:0px;top:600px;width:930.3px;height:18.8px;background:#e4ffc7"></div><div class="m" style="left:34.81px;top:599.6px;color:#12272e">83539</div><div class="m" style="left:90.9px;top:599.6px;color:#12272e">3909.5013006…</div><div class="m" style="left:226px;top:599.6px;color:#12272e">95.216.195.133</div><div class="m" style="left:429.6px;top:599.6px;color:#12272e">192.168.146.96</div><div class="m" style="left:631.5px;top:599.6px;color:#12272e">HTTP</div><div class="m" style="left:752.33px;top:599.6px;color:#12272e">260</div><div class="m" style="left:789.7px;top:599.6px;color:#12272e">HTTP/1.1 200 OK (text/plain)</div><div style="left:0px;top:618.75px;width:930.3px;height:18.8px;background:#e4ffc7"></div><div class="m" style="left:34.81px;top:618.35px;color:#12272e">87936</div><div class="m" style="left:90.9px;top:618.35px;color:#12272e">4209.3692330…</div><div class="m" style="left:226px;top:618.35px;color:#12272e">192.168.146.96</div><div class="m" style="left:429.6px;top:618.35px;color:#12272e">95.216.195.133</div><div class="m" style="left:631.5px;top:618.35px;color:#12272e">HTTP</div><div class="m" style="left:752.33px;top:618.35px;color:#12272e">144</div><div class="m" style="left:789.7px;top:618.35px;color:#12272e">GET /nm-check.txt HTTP/1.1</div><div style="left:0px;top:637.5px;width:930.3px;height:18.8px;background:#e4ffc7"></div><div class="m" style="left:34.81px;top:637.1px;color:#12272e">87938</div><div class="m" style="left:90.9px;top:637.1px;color:#12272e">4209.5307728…</div><div class="m" style="left:226px;top:637.1px;color:#12272e">95.216.195.133</div><div class="m" style="left:429.6px;top:637.1px;color:#12272e">192.168.146.96</div><div class="m" style="left:631.5px;top:637.1px;color:#12272e">HTTP</div><div class="m" style="left:752.33px;top:637.1px;color:#12272e">260</div><div class="m" style="left:789.7px;top:637.1px;color:#12272e">HTTP/1.1 200 OK (text/plain)</div><div style="left:0px;top:656.25px;width:930.3px;height:18.8px;background:#e4ffc7"></div><div class="m" style="left:34.81px;top:655.85px;color:#12272e">90611</div><div class="m" style="left:90.9px;top:655.85px;color:#12272e">4509.3649446…</div><div class="m" style="left:226px;top:655.85px;color:#12272e">192.168.146.96</div><div class="m" style="left:429.6px;top:655.85px;color:#12272e">95.216.195.133</div><div class="m" style="left:631.5px;top:655.85px;color:#12272e">HTTP</div><div class="m" style="left:752.33px;top:655.85px;color:#12272e">144</div><div class="m" style="left:789.7px;top:655.85px;color:#12272e">GET /nm-check.txt HTTP/1.1</div><div style="left:0px;top:675px;width:930.3px;height:18.8px;background:#e4ffc7"></div><div class="m" style="left:34.81px;top:674.6px;color:#12272e">90614</div><div class="m" style="left:90.9px;top:674.6px;color:#12272e">4509.4676125…</div><div class="m" style="left:226px;top:674.6px;color:#12272e">95.216.195.133</div><div class="m" style="left:429.6px;top:674.6px;color:#12272e">192.168.146.96</div><div class="m" style="left:631.5px;top:674.6px;color:#12272e">HTTP</div><div class="m" style="left:752.33px;top:674.6px;color:#12272e">260</div><div class="m" style="left:789.7px;top:674.6px;color:#12272e">HTTP/1.1 200 OK (text/plain)</div><div style="left:0px;top:693.75px;width:930.3px;height:18.8px;background:#e4ffc7"></div><div class="m" style="left:34.81px;top:693.35px;color:#12272e">93469</div><div class="m" style="left:90.9px;top:693.35px;color:#12272e">4809.3707372…</div><div class="m" style="left:226px;top:693.35px;color:#12272e">192.168.146.96</div><div class="m" style="left:429.6px;top:693.35px;color:#12272e">95.216.195.133</div><div class="m" style="left:631.5px;top:693.35px;color:#12272e">HTTP</div><div class="m" style="left:752.33px;top:693.35px;color:#12272e">144</div><div class="m" style="left:789.7px;top:693.35px;color:#12272e">GET /nm-check.txt HTTP/1.1</div><div style="left:0px;top:712.5px;width:930.3px;height:18.8px;background:#e4ffc7"></div><div class="m" style="left:34.81px;top:712.1px;color:#12272e">93471</div><div class="m" style="left:90.9px;top:712.1px;color:#12272e">4809.4695650…</div><div class="m" style="left:226px;top:712.1px;color:#12272e">95.216.195.133</div><div class="m" style="left:429.6px;top:712.1px;color:#12272e">192.168.146.96</div><div class="m" style="left:631.5px;top:712.1px;color:#12272e">HTTP</div><div class="m" style="left:752.33px;top:712.1px;color:#12272e">260</div><div class="m" style="left:789.7px;top:712.1px;color:#12272e">HTTP/1.1 200 OK (text/plain)</div><div style="left:0px;top:731.25px;width:930.3px;height:18.8px;background:#e4ffc7"></div><div class="m" style="left:34.81px;top:730.85px;color:#12272e">96187</div><div class="m" style="left:90.9px;top:730.85px;color:#12272e">5109.3675610…</div><div class="m" style="left:226px;top:730.85px;color:#12272e">192.168.146.96</div><div class="m" style="left:429.6px;top:730.85px;color:#12272e">95.216.195.133</div><div class="m" style="left:631.5px;top:730.85px;color:#12272e">HTTP</div><div class="m" style="left:752.33px;top:730.85px;color:#12272e">144</div><div class="m" style="left:789.7px;top:730.85px;color:#12272e">GET /nm-check.txt HTTP/1.1</div><div style="left:0px;top:750px;width:930.3px;height:18.8px;background:#e4ffc7"></div><div class="m" style="left:34.81px;top:749.6px;color:#12272e">96189</div><div class="m" style="left:90.9px;top:749.6px;color:#12272e">5109.4724917…</div><div class="m" style="left:226px;top:749.6px;color:#12272e">95.216.195.133</div><div class="m" style="left:429.6px;top:749.6px;color:#12272e">192.168.146.96</div><div class="m" style="left:631.5px;top:749.6px;color:#12272e">HTTP</div><div class="m" style="left:752.33px;top:749.6px;color:#12272e">260</div><div class="m" style="left:789.7px;top:749.6px;color:#12272e">HTTP/1.1 200 OK (text/plain)</div><div style="left:0px;top:768.75px;width:930.3px;height:18.8px;background:#e4ffc7"></div><div class="m" style="left:34.81px;top:768.35px;color:#12272e">99114</div><div class="m" style="left:90.9px;top:768.35px;color:#12272e">5409.4451088…</div><div class="m" style="left:226px;top:768.35px;color:#12272e">192.168.146.96</div><div class="m" style="left:429.6px;top:768.35px;color:#12272e">95.216.195.133</div><div class="m" style="left:631.5px;top:768.35px;color:#12272e">HTTP</div><div class="m" style="left:752.33px;top:768.35px;color:#12272e">144</div><div class="m" style="left:789.7px;top:768.35px;color:#12272e">GET /nm-check.txt HTTP/1.1</div><div style="left:0px;top:787.5px;width:930.3px;height:18.8px;background:#e4ffc7"></div><div class="m" style="left:34.81px;top:787.1px;color:#12272e">99117</div><div class="m" style="left:90.9px;top:787.1px;color:#12272e">5409.5509100…</div><div class="m" style="left:226px;top:787.1px;color:#12272e">95.216.195.133</div><div class="m" style="left:429.6px;top:787.1px;color:#12272e">192.168.146.96</div><div class="m" style="left:631.5px;top:787.1px;color:#12272e">HTTP</div><div class="m" style="left:752.33px;top:787.1px;color:#12272e">260</div><div class="m" style="left:789.7px;top:787.1px;color:#12272e">HTTP/1.1 200 OK (text/plain)</div><div style="left:10.2px;top:394.75px;width:1.6px;height:55.25px;background:#9a9a9a"></div><div style="left:10.2px;top:450px;width:1.6px;height:18.75px;background:#ffffff"></div></div><div style="left:930.2px;top:116.8px;width:18.8px;height:832.4px;background:#fdfdfd;border-left:1.1px solid #c2c2c2"></div><div style="left:931.3px;top:116.8px;width:17.7px;height:18.6px;background:linear-gradient(90deg,#fdfdfd,#f3f3f3);border:1px solid #c6c6c6"></div><svg style="position:absolute;left:935.15px;top:123.5px;overflow:visible;" width="10" height="5.2" viewBox="0 0 10 5.2"><polygon points="0,5.2 5,0 10,5.2" fill="#555"/></svg><div style="left:931.3px;top:135.4px;width:17.7px;height:183.6px;background:linear-gradient(90deg,#e6e6e6,#e2e2e2);border-bottom:1.1px solid #bdbdbd;border-top:1px solid #c8c8c8"></div><div style="left:931.3px;top:930.8px;width:17.7px;height:18.4px;background:linear-gradient(90deg,#fdfdfd,#f3f3f3);border:1px solid #c6c6c6"></div><svg style="position:absolute;left:935.15px;top:937.4px;overflow:visible;" width="10" height="5.2" viewBox="0 0 10 5.2"><polygon points="0,0 10,0 5,5.2" fill="#555"/></svg><div style="left:0px;top:949.2px;width:949px;height:18.5px;background:#efefef"></div><div style="left:0px;top:949.2px;width:930.3px;height:18.5px;background:#e6e6e6;border-top:1px solid #c0c0c0;border-bottom:1px solid #c0c0c0"></div><div style="left:0px;top:949.2px;width:19.5px;height:18.5px;background:linear-gradient(90deg,#fdfdfd,#f3f3f3);border:1px solid #c6c6c6"></div><svg style="position:absolute;left:7.15px;top:953.45px;overflow:visible;" width="5.2" height="10" viewBox="0 0 5.2 10"><polygon points="5.2,0 0,5 5.2,10" fill="#555"/></svg><div style="left:19.5px;top:949.2px;width:178.5px;height:18.5px;background:linear-gradient(#fdfdfd,#f1f1f1);border:1px solid #c0c0c0"></div><div style="left:911.5px;top:949.2px;width:18.8px;height:18.5px;background:linear-gradient(90deg,#fdfdfd,#f3f3f3);border:1px solid #c6c6c6"></div><svg style="position:absolute;left:918.3px;top:953.45px;overflow:visible;" width="5.2" height="10" viewBox="0 0 5.2 10"><polygon points="0,0 5.2,5 0,10" fill="#555"/></svg><div style="left:930.3px;top:949.2px;width:18.7px;height:18.5px;background:#f4f4f4;border:1px solid #d0d0d0"></div><div style="left:466.2px;top:970.2px;width:1.4px;height:1.4px;background:#b0b0b0"></div><div style="left:470.2px;top:970.2px;width:1.4px;height:1.4px;background:#b0b0b0"></div><div style="left:474.2px;top:970.2px;width:1.4px;height:1.4px;background:#b0b0b0"></div><div style="left:478.2px;top:970.2px;width:1.4px;height:1.4px;background:#b0b0b0"></div><div style="left:482.2px;top:970.2px;width:1.4px;height:1.4px;background:#b0b0b0"></div><div style="left:486.2px;top:970.2px;width:1.4px;height:1.4px;background:#b0b0b0"></div><div style="left:0px;top:974px;width:906.2px;height:1.4px;background:#bbbbbb"></div><div style="left:0px;top:975.4px;width:906.2px;height:108.6px;background:#fff"></div><div style="left:0px;top:975.4px;width:906.2px;height:108.6px;overflow:hidden;"><div style="left:27.8px;top:0px;width:880px;height:18.75px;background:#efefef"></div><div class="m" style="left:31.8px;top:-0.6px;">Frame 58047: 88 bytes on wire (704 bits), 88 bytes captured (704 bits) on interface any, id 0</div><svg style="position:absolute;left:12.2px;top:4.6px;overflow:visible;" width="4.8" height="9.6" viewBox="0 0 4.8 9.6"><polygon points="0,0 4.8,4.8 0,9.6" fill="#505050"/></svg><div style="left:27.8px;top:18.75px;width:880px;height:18.75px;background:#efefef"></div><div class="m" style="left:31.8px;top:18.15px;">Linux cooked capture v1</div><svg style="position:absolute;left:12.2px;top:23.35px;overflow:visible;" width="4.8" height="9.6" viewBox="0 0 4.8 9.6"><polygon points="0,0 4.8,4.8 0,9.6" fill="#505050"/></svg><div style="left:27.8px;top:37.5px;width:880px;height:18.75px;background:#efefef"></div><div class="m" style="left:31.8px;top:36.9px;">Internet Protocol Version 4, Src: 192.168.146.96, Dst: 34.78.151.183</div><svg style="position:absolute;left:12.2px;top:42.1px;overflow:visible;" width="4.8" height="9.6" viewBox="0 0 4.8 9.6"><polygon points="0,0 4.8,4.8 0,9.6" fill="#505050"/></svg><div style="left:27.8px;top:56.25px;width:880px;height:18.75px;background:#efefef"></div><div class="m" style="left:31.8px;top:55.65px;">Transmission Control Protocol, Src Port: 53836, Dst Port: 443, Seq: 730, Ack: 5333, Len: 32</div><svg style="position:absolute;left:12.2px;top:60.85px;overflow:visible;" width="4.8" height="9.6" viewBox="0 0 4.8 9.6"><polygon points="0,0 4.8,4.8 0,9.6" fill="#505050"/></svg><div style="left:27.8px;top:75px;width:880px;height:18.75px;background:#efefef"></div><div class="m" style="left:31.8px;top:74.4px;">Transport Layer Security</div><svg style="position:absolute;left:12.2px;top:79.6px;overflow:visible;" width="4.8" height="9.6" viewBox="0 0 4.8 9.6"><polygon points="0,0 4.8,4.8 0,9.6" fill="#505050"/></svg><div style="left:27.8px;top:93.75px;width:880px;height:18.75px;background:#efefef"></div><div class="m" style="left:31.8px;top:93.15px;">WebSocket</div><svg style="position:absolute;left:9.6px;top:100.35px;overflow:visible;" width="9.8" height="5" viewBox="0 0 9.8 5"><polygon points="0,0 9.8,0 4.9,5" fill="#505050"/></svg></div><div style="left:906.2px;top:975.4px;width:19.2px;height:108.6px;background:#e6e6e6;border-left:1px solid #c0c0c0"></div><div style="left:906.2px;top:975.4px;width:19.2px;height:17.9px;background:linear-gradient(90deg,#fdfdfd,#f3f3f3);border:1px solid #c6c6c6"></div><svg style="position:absolute;left:910.8px;top:981.75px;overflow:visible;" width="10" height="5.2" viewBox="0 0 10 5.2"><polygon points="0,5.2 5,0 10,5.2" fill="#555"/></svg><div style="left:906.2px;top:993.3px;width:19.2px;height:36.4px;background:linear-gradient(90deg,#fdfdfd,#f1f1f1);border:1px solid #c0c0c0"></div><div style="left:906.2px;top:1065px;width:19.2px;height:19px;background:linear-gradient(90deg,#fdfdfd,#f3f3f3);border:1px solid #c6c6c6"></div><svg style="position:absolute;left:910.8px;top:1071.9px;overflow:visible;" width="10" height="5.2" viewBox="0 0 10 5.2"><polygon points="0,0 10,0 5,5.2" fill="#555"/></svg><div style="left:0px;top:1084px;width:906.2px;height:19px;background:#e6e6e6;border-top:1px solid #c0c0c0;border-bottom:1px solid #c0c0c0"></div><div style="left:0px;top:1084px;width:19.5px;height:19px;background:linear-gradient(90deg,#fdfdfd,#f3f3f3);border:1px solid #c6c6c6"></div><svg style="position:absolute;left:7.15px;top:1088.5px;overflow:visible;" width="5.2" height="10" viewBox="0 0 5.2 10"><polygon points="5.2,0 0,5 5.2,10" fill="#555"/></svg><div style="left:19.5px;top:1084px;width:842.8px;height:19px;background:linear-gradient(#fdfdfd,#f1f1f1);border:1px solid #c0c0c0"></div><div style="left:888.2px;top:1084px;width:18px;height:19px;background:linear-gradient(90deg,#fdfdfd,#f3f3f3);border:1px solid #c6c6c6"></div><svg style="position:absolute;left:894.6px;top:1088.5px;overflow:visible;" width="5.2" height="10" viewBox="0 0 5.2 10"><polygon points="0,0 5.2,5 0,10" fill="#555"/></svg><div style="left:906.2px;top:1084px;width:19.2px;height:19px;background:#f0f0f0;border:1px solid #d0d0d0"></div><div style="left:928.8px;top:1030px;width:1px;height:1.6px;background:#a8a8a8"></div><div style="left:928.8px;top:1034px;width:1px;height:1.6px;background:#a8a8a8"></div><div style="left:928.8px;top:1038px;width:1px;height:1.6px;background:#a8a8a8"></div><div style="left:928.8px;top:1042px;width:1px;height:1.6px;background:#a8a8a8"></div><div style="left:928.8px;top:1046px;width:1px;height:1.6px;background:#a8a8a8"></div><div style="left:928.8px;top:1050px;width:1px;height:1.6px;background:#a8a8a8"></div><div style="left:931.1px;top:975.4px;width:18.3px;height:127.6px;background:#efefef"></div><div style="left:931.1px;top:975.4px;width:18.3px;height:17.9px;background:linear-gradient(90deg,#fdfdfd,#f3f3f3);border:1px solid #c6c6c6"></div><svg style="position:absolute;left:935.25px;top:981.75px;overflow:visible;" width="10" height="5.2" viewBox="0 0 10 5.2"><polygon points="0,5.2 5,0 10,5.2" fill="#555"/></svg><div style="left:931.1px;top:993.3px;width:18.3px;height:35.7px;background:linear-gradient(90deg,#fdfdfd,#f1f1f1);border:1px solid #c6c6c6"></div><div style="left:931.1px;top:1029px;width:18.3px;height:2px;background:#c8c8c8"></div><div style="left:931.1px;top:1031px;width:18.3px;height:17px;background:linear-gradient(90deg,#fdfdfd,#f3f3f3);border:1px solid #c6c6c6"></div><svg style="position:absolute;left:935.25px;top:1036.9px;overflow:visible;" width="10" height="5.2" viewBox="0 0 10 5.2"><polygon points="0,0 10,0 5,5.2" fill="#555"/></svg><div style="left:932.9px;top:1049.9px;width:16.5px;height:18.3px;background:#efefef;border:1px solid #c6c6c6"></div><div style="left:932.9px;top:1069px;width:16.5px;height:14px;background:linear-gradient(90deg,#fdfdfd,#f3f3f3);border:1px solid #c6c6c6"></div><svg style="position:absolute;left:938.55px;top:1071px;overflow:visible;" width="5.2" height="10" viewBox="0 0 5.2 10"><polygon points="5.2,0 0,5 5.2,10" fill="#c8c8c8"/></svg><div style="left:931.1px;top:1084px;width:18.3px;height:19px;background:linear-gradient(90deg,#fdfdfd,#f3f3f3);border:1px solid #c6c6c6"></div><svg style="position:absolute;left:937.65px;top:1088.5px;overflow:visible;" width="5.2" height="10" viewBox="0 0 5.2 10"><polygon points="0,0 5.2,5 0,10" fill="#555"/></svg><div style="left:0px;top:1103px;width:950px;height:31px;background:#efefef;border-top:1px solid #d8d8d8"></div><svg style="position:absolute;left:13px;top:1109.6px;overflow:visible;" width="19" height="19" viewBox="0 0 19 19"><circle cx="9.4" cy="9.1" r="8.6" fill="#e86e6c" stroke="#8c5a36" stroke-width="1.1"/><g fill="#f0d080"><rect x="5.6" y="5" width="1" height="2.6"/><rect x="8" y="3.6" width="1" height="3"/><rect x="9.4" y="5" width="1" height="1"/><rect x="10.6" y="6.3" width="1" height="1"/><rect x="11.8" y="4.2" width="1" height="1"/><rect x="12.2" y="7.6" width="1" height="1"/><rect x="3.2" y="8" width="1" height="1"/><rect x="5.2" y="9.6" width="1" height="1"/><rect x="7.2" y="9.6" width="1" height="1"/><rect x="9.6" y="7.2" width="1" height="1"/></g></svg><svg style="position:absolute;left:44px;top:1109px;overflow:visible;" width="20" height="20" viewBox="0 0 20 20"><rect x="0.8" y="1.2" width="14.6" height="17.4" rx="1" fill="#f4f4f4" stroke="#c0c0c0" stroke-width="1"/><rect x="1.3" y="1.7" width="13.6" height="5.4" rx="1" fill="#3a9ae0"/><path d="M5,7 L7,2.8 L8.4,7 Z" fill="#fff"/><path d="M5.8,13.8 L17.2,2.6" stroke="#3a3a3a" stroke-width="3.4" stroke-linecap="round"/><path d="M4.8,15.6 L6.4,13" stroke="#111" stroke-width="2"/></svg><div class="s" style="left:82.5px;top:1110.1px;font-size:15.85px">WebSocket: Protocol</div><div style="left:526px;top:1111.5px;width:1px;height:1.6px;background:#b0b0b0"></div><div style="left:526px;top:1115px;width:1px;height:1.6px;background:#b0b0b0"></div><div style="left:526px;top:1118.5px;width:1px;height:1.6px;background:#b0b0b0"></div><div style="left:526px;top:1122px;width:1px;height:1.6px;background:#b0b0b0"></div><div style="left:526px;top:1125.5px;width:1px;height:1.6px;background:#b0b0b0"></div><div style="left:826.2px;top:1111.5px;width:1px;height:1.6px;background:#b0b0b0"></div><div style="left:826.2px;top:1115px;width:1px;height:1.6px;background:#b0b0b0"></div><div style="left:826.2px;top:1118.5px;width:1px;height:1.6px;background:#b0b0b0"></div><div style="left:826.2px;top:1122px;width:1px;height:1.6px;background:#b0b0b0"></div><div style="left:826.2px;top:1125.5px;width:1px;height:1.6px;background:#b0b0b0"></div><div class="s" style="left:541.3px;top:1110.1px;font-size:15.68px">Packets: 101458 · Displayed: 46 (0.0%)</div><div class="s" style="left:841.3px;top:1110.1px;font-size:15.6px">Profile: Default</div></div><div style="left:963px;top:3px;width:954px;height:1139px;background:#4b5670"></div><div style="left:964px;top:4.2px;width:951.5px;height:28px;background:#3b3128"></div><div style="left:1279px;top:4.2px;width:3px;height:28px;background:#5a6278"></div><div style="left:1597px;top:4.2px;width:3px;height:28px;background:#5a6278"></div><div class="s" style="left:969.2px;top:7.6px;color:#fff;font-size:17.3px">Wireshark · Packet 58041 · any</div><div class="s" style="left:1287.5px;top:7.6px;color:#fff;font-size:17.3px">Wireshark · Packet 58040 · any</div><div class="s" style="left:1605.5px;top:7.6px;color:#fff;font-size:17.3px">Wireshark · Packet 58035 · any</div><div style="left:965px;top:33.3px;width:949.8px;height:1106.4px;overflow:hidden;background:#efefef"><div style="left:0px;top:0px;width:949.8px;height:1.6px;background:#fafafa"></div><div style="left:15.5px;top:15.2px;width:919px;height:448.5px;background:#b4b4b4"></div><div style="left:18px;top:17.7px;width:914.5px;height:426.9px;background:#fff"></div><div style="left:18px;top:17.7px;width:914.5px;height:426.9px;overflow:hidden;"><div style="left:26.3px;top:0px;width:890px;height:18.75px;background:#efefef"></div><div class="m" style="left:30.8px;top:-0.2px;">Frame 58041: 269 bytes on wire (2152 bits), 269 bytes captured (2152 bits) on interface any, id 0</div><svg style="position:absolute;left:12.2px;top:4.6px;overflow:visible;" width="4.8" height="9.6" viewBox="0 0 4.8 9.6"><polygon points="0,0 4.8,4.8 0,9.6" fill="#505050"/></svg><div style="left:26.3px;top:18.75px;width:890px;height:18.75px;background:#efefef"></div><div class="m" style="left:30.8px;top:18.55px;">Linux cooked capture v1</div><svg style="position:absolute;left:12.2px;top:23.35px;overflow:visible;" width="4.8" height="9.6" viewBox="0 0 4.8 9.6"><polygon points="0,0 4.8,4.8 0,9.6" fill="#505050"/></svg><div style="left:26.3px;top:37.5px;width:890px;height:18.75px;background:#efefef"></div><div class="m" style="left:30.8px;top:37.3px;">Internet Protocol Version 4, Src: 34.78.151.183, Dst: 192.168.146.96</div><svg style="position:absolute;left:12.2px;top:42.1px;overflow:visible;" width="4.8" height="9.6" viewBox="0 0 4.8 9.6"><polygon points="0,0 4.8,4.8 0,9.6" fill="#505050"/></svg><div style="left:26.3px;top:56.25px;width:890px;height:18.75px;background:#efefef"></div><div class="m" style="left:30.8px;top:56.05px;">Transmission Control Protocol, Src Port: 443, Dst Port: 53836, Seq: 5120, Ack: 730, Len: 213</div><svg style="position:absolute;left:12.2px;top:60.85px;overflow:visible;" width="4.8" height="9.6" viewBox="0 0 4.8 9.6"><polygon points="0,0 4.8,4.8 0,9.6" fill="#505050"/></svg><div style="left:26.3px;top:75px;width:890px;height:18.75px;background:#efefef"></div><div class="m" style="left:30.8px;top:74.8px;">Transport Layer Security</div><svg style="position:absolute;left:12.2px;top:79.6px;overflow:visible;" width="4.8" height="9.6" viewBox="0 0 4.8 9.6"><polygon points="0,0 4.8,4.8 0,9.6" fill="#505050"/></svg><div style="left:26.3px;top:93.75px;width:890px;height:18.75px;background:#efefef"></div><div class="m" style="left:30.8px;top:93.55px;">WebSocket</div><svg style="position:absolute;left:9.6px;top:100.15px;overflow:visible;" width="9.8" height="5" viewBox="0 0 9.8 5"><polygon points="0,0 9.8,0 4.9,5" fill="#505050"/></svg><div class="m" style="left:57.3px;top:112.3px;">1... .... = Fin: True</div><div class="m" style="left:57.3px;top:131.05px;">.000 .... = Reserved: 0x0</div><div class="m" style="left:57.3px;top:149.8px;">.... 0001 = Opcode: Text (1)</div><div class="m" style="left:57.3px;top:168.55px;">0... .... = Mask: False</div><div class="m" style="left:57.3px;top:187.3px;">.111 1110 = Payload length: 126 Extended Payload Length (16 bits)</div><div class="m" style="left:57.3px;top:206.05px;">Extended Payload length (16 bits): 187</div><div class="m" style="left:57.3px;top:224.8px;">Payload</div><div style="left:26.3px;top:243.75px;width:890px;height:18.75px;background:#efefef"></div><div class="m" style="left:30.8px;top:243.55px;">Line-based text data (1 lines)</div><svg style="position:absolute;left:9.6px;top:250.15px;overflow:visible;" width="9.8" height="5" viewBox="0 0 9.8 5"><polygon points="0,0 9.8,0 4.9,5" fill="#505050"/></svg><div style="left:0px;top:262.5px;width:914.5px;height:18.75px;background:#308cc6"></div><div class="m" style="left:57.3px;top:262.3px;color:#fff">{"error":{"code":16,"message":"authentication_error","details":[{"@type":"type.googleapis.com/google.rpc.LocalizedMessage","locale":"en-US","message":"Route needs to be authenticated"}]}}</div></div><div style="left:18px;top:444.6px;width:914.5px;height:18.8px;background:#e6e6e6;border-top:1px solid #c0c0c0"></div><div style="left:18px;top:444.6px;width:17px;height:18.8px;background:linear-gradient(90deg,#fdfdfd,#f3f3f3);border:1px solid #c6c6c6"></div><svg style="position:absolute;left:23.9px;top:449px;overflow:visible;" width="5.2" height="10" viewBox="0 0 5.2 10"><polygon points="5.2,0 0,5 5.2,10" fill="#555"/></svg><div style="left:35px;top:444.6px;width:828px;height:18.8px;background:linear-gradient(#fdfdfd,#f1f1f1);border:1px solid #c0c0c0;border-bottom:none"></div><div style="left:914.2px;top:444.6px;width:18.3px;height:18.8px;background:linear-gradient(90deg,#fdfdfd,#f3f3f3);border:1px solid #c6c6c6"></div><svg style="position:absolute;left:920.75px;top:449px;overflow:visible;" width="5.2" height="10" viewBox="0 0 5.2 10"><polygon points="0,0 5.2,5 0,10" fill="#555"/></svg><div style="left:0px;top:463.7px;width:949.8px;height:6.3px;background:#efefef"></div><div style="left:465.6px;top:465.5px;width:1.4px;height:1.4px;background:#a0a0a0"></div><div style="left:469.65px;top:465.5px;width:1.4px;height:1.4px;background:#a0a0a0"></div><div style="left:473.7px;top:465.5px;width:1.4px;height:1.4px;background:#a0a0a0"></div><div style="left:477.75px;top:465.5px;width:1.4px;height:1.4px;background:#a0a0a0"></div><div style="left:481.8px;top:465.5px;width:1.4px;height:1.4px;background:#a0a0a0"></div><div style="left:485.85px;top:465.5px;width:1.4px;height:1.4px;background:#a0a0a0"></div><div style="left:15.5px;top:470px;width:919px;height:484px;background:#b4b4b4"></div><div style="left:18px;top:470.5px;width:914.5px;height:481.6px;background:#fff"></div><div style="left:18px;top:470.5px;width:57px;height:481.6px;background:#efefef"></div><div style="left:18px;top:470.5px;width:914.5px;height:481.6px;overflow:hidden;"><div style="left:181.98px;top:0.4px;width:348.65px;height:18.75px;background:#308cc6"></div><div style="left:598.24px;top:0.4px;width:126.05px;height:18.75px;background:#308cc6"></div><div class="m" style="left:9.1px;top:-0.2px;color:#7a7a7a">0000</div><div class="m" style="left:67.05px;top:-0.2px;">81 7e 00 bb </div><div class="m" style="left:182.94px;top:-0.2px;color:#fff">7b 22 65 72  72 6f 72 22 3a 7b 22 63</div><div class="m" style="left:559.61px;top:-0.2px;color:#999">·</div><div class="m" style="left:569.26px;top:-0.2px;">~</div><div class="m" style="left:578.92px;top:-0.2px;color:#999">··</div><div class="m" style="left:598.24px;top:-0.2px;color:#fff">{"er ror":{"c</div><div style="left:66.57px;top:19.15px;width:464.07px;height:18.75px;background:#308cc6"></div><div style="left:558.64px;top:19.15px;width:165.15px;height:18.75px;background:#308cc6"></div><div class="m" style="left:9.1px;top:18.55px;color:#7a7a7a">0010</div><div class="m" style="left:67.05px;top:18.55px;color:#fff">6f 64 65 22 3a 31 36 2c  22 6d 65 73 73 61 67 65</div><div class="m" style="left:559.61px;top:18.55px;color:#fff">ode":16, "message</div><div style="left:66.57px;top:37.9px;width:464.07px;height:18.75px;background:#308cc6"></div><div style="left:558.64px;top:37.9px;width:165.15px;height:18.75px;background:#308cc6"></div><div class="m" style="left:9.1px;top:37.3px;color:#7a7a7a">0020</div><div class="m" style="left:67.05px;top:37.3px;color:#fff">22 3a 22 61 75 74 68 65  6e 74 69 63 61 74 69 6f</div><div class="m" style="left:559.61px;top:37.3px;color:#fff">":"authe nticatio</div><div style="left:66.57px;top:56.65px;width:464.07px;height:18.75px;background:#308cc6"></div><div style="left:558.64px;top:56.65px;width:165.15px;height:18.75px;background:#308cc6"></div><div class="m" style="left:9.1px;top:56.05px;color:#7a7a7a">0030</div><div class="m" style="left:67.05px;top:56.05px;color:#fff">6e 5f 65 72 72 6f 72 22  2c 22 64 65 74 61 69 6c</div><div class="m" style="left:559.61px;top:56.05px;color:#fff">n_error" ,"detail</div><div style="left:66.57px;top:75.4px;width:464.07px;height:18.75px;background:#308cc6"></div><div style="left:558.64px;top:75.4px;width:165.15px;height:18.75px;background:#308cc6"></div><div class="m" style="left:9.1px;top:74.8px;color:#7a7a7a">0040</div><div class="m" style="left:67.05px;top:74.8px;color:#fff">73 22 3a 5b 7b 22 40 74  79 70 65 22 3a 22 74 79</div><div class="m" style="left:559.61px;top:74.8px;color:#fff">s":[{"@t ype":"ty</div><div style="left:66.57px;top:94.15px;width:464.07px;height:18.75px;background:#308cc6"></div><div style="left:558.64px;top:94.15px;width:165.15px;height:18.75px;background:#308cc6"></div><div class="m" style="left:9.1px;top:93.55px;color:#7a7a7a">0050</div><div class="m" style="left:67.05px;top:93.55px;color:#fff">70 65 2e 67 6f 6f 67 6c  65 61 70 69 73 2e 63 6f</div><div class="m" style="left:559.61px;top:93.55px;color:#fff">pe.googl eapis.co</div><div style="left:66.57px;top:112.9px;width:464.07px;height:18.75px;background:#308cc6"></div><div style="left:558.64px;top:112.9px;width:165.15px;height:18.75px;background:#308cc6"></div><div class="m" style="left:9.1px;top:112.3px;color:#7a7a7a">0060</div><div class="m" style="left:67.05px;top:112.3px;color:#fff">6d 2f 67 6f 6f 67 6c 65  2e 72 70 63 2e 4c 6f 63</div><div class="m" style="left:559.61px;top:112.3px;color:#fff">m/google .rpc.Loc</div><div style="left:66.57px;top:131.65px;width:464.07px;height:18.75px;background:#308cc6"></div><div style="left:558.64px;top:131.65px;width:165.15px;height:18.75px;background:#308cc6"></div><div class="m" style="left:9.1px;top:131.05px;color:#7a7a7a">0070</div><div class="m" style="left:67.05px;top:131.05px;color:#fff">61 6c 69 7a 65 64 4d 65  73 73 61 67 65 22 2c 22</div><div class="m" style="left:559.61px;top:131.05px;color:#fff">alizedMe ssage","</div><div style="left:66.57px;top:150.4px;width:464.07px;height:18.75px;background:#308cc6"></div><div style="left:558.64px;top:150.4px;width:165.15px;height:18.75px;background:#308cc6"></div><div class="m" style="left:9.1px;top:149.8px;color:#7a7a7a">0080</div><div class="m" style="left:67.05px;top:149.8px;color:#fff">6c 6f 63 61 6c 65 22 3a  22 65 6e 2d 55 53 22 2c</div><div class="m" style="left:559.61px;top:149.8px;color:#fff">locale": "en-US",</div><div style="left:66.57px;top:169.15px;width:464.07px;height:18.75px;background:#308cc6"></div><div style="left:558.64px;top:169.15px;width:165.15px;height:18.75px;background:#308cc6"></div><div class="m" style="left:9.1px;top:168.55px;color:#7a7a7a">0090</div><div class="m" style="left:67.05px;top:168.55px;color:#fff">22 6d 65 73 73 61 67 65  22 3a 22 52 6f 75 74 65</div><div class="m" style="left:559.61px;top:168.55px;color:#fff">"message ":"Route</div><div style="left:66.57px;top:187.9px;width:464.07px;height:18.75px;background:#308cc6"></div><div style="left:558.64px;top:187.9px;width:165.15px;height:18.75px;background:#308cc6"></div><div class="m" style="left:9.1px;top:187.3px;color:#7a7a7a">00a0</div><div class="m" style="left:67.05px;top:187.3px;color:#fff">20 6e 65 65 64 73 20 74  6f 20 62 65 20 61 75 74</div><div class="m" style="left:559.61px;top:187.3px;color:#fff"> needs t o be aut</div><div style="left:66.57px;top:206.65px;width:435.09px;height:18.75px;background:#308cc6"></div><div style="left:558.64px;top:206.65px;width:155.49px;height:18.75px;background:#308cc6"></div><div class="m" style="left:9.1px;top:206.05px;color:#7a7a7a">00b0</div><div class="m" style="left:67.05px;top:206.05px;color:#fff">68 65 6e 74 69 63 61 74  65 64 22 7d 5d 7d 7d</div><div class="m" style="left:559.61px;top:206.05px;color:#fff">henticat ed"}]}}</div></div><div style="left:15.4px;top:953.7px;width:1px;height:36px;background:#c0c0c0"></div><div style="left:15.4px;top:988.6px;width:919.1px;height:1.2px;background:#c0c0c0"></div><div style="left:934px;top:953.7px;width:1px;height:36px;background:#c8c8c8"></div><div style="left:17.5px;top:953.7px;width:160.5px;height:30.2px;background:linear-gradient(#ececec,#e4e4e4);border:1px solid #c4c4c4;border-top:none;border-radius:0 0 3px 3px"></div><div style="left:178px;top:953.7px;width:221.5px;height:32.3px;background:#fff;border:1px solid #c4c4c4;border-top:none;border-radius:0 0 3px 3px"></div><div class="s" style="left:32px;top:960.2px;font-size:15.85px">Frame (269 bytes)</div><div class="s" style="left:193px;top:961.2px;font-size:15.95px">Decrypted TLS (191 bytes)</div><div style="left:15.2px;top:1028.7px;width:18.3px;height:18.3px;background:#fff;border:1px solid #b0b0b0;border-radius:2px"></div><svg style="position:absolute;left:15.2px;top:1028.7px;overflow:visible;" width="18.3" height="18.3" viewBox="0 0 18.3 18.3"><path d="M4.5,9.5 L8,14.5 L13.5,3.5" fill="none" stroke="#111" stroke-width="2.2"/></svg><div class="s" style="left:40px;top:1028.7px;font-size:15.85px">Show packet bytes</div><div style="left:712.3px;top:1060.2px;width:106.8px;height:31.1px;background:linear-gradient(#fbfcfd,#dfe6ec);border:1.3px solid #3c78c0;border-radius:3px"></div><svg style="position:absolute;left:733px;top:1068.2px;overflow:visible;" width="18" height="16" viewBox="0 0 18 16"><path d="M2,1 Q9,6 16,15" stroke="#111" stroke-width="3" fill="none"/><path d="M14,1 Q8,7 1,15" stroke="#111" stroke-width="2.6" fill="none"/></svg><div class="s" style="left:754.5px;top:1065.7px;font-size:16px">Close</div><div style="left:828.1px;top:1060.2px;width:106.4px;height:31.1px;background:linear-gradient(#fdfdfd,#eeeeee);border:1px solid #c0c0c0;border-radius:3px"></div><svg style="position:absolute;left:849.5px;top:1065.2px;overflow:visible;" width="23" height="23" viewBox="0 0 23 23"><circle cx="11.5" cy="11.5" r="7.5" fill="none" stroke="#e8e8e8" stroke-width="5"/><path d="M4,4 L8.5,8.5 M19,4 L14.5,8.5 M4,19 L8.5,14.5 M19,19 L14.5,14.5" stroke="#e85a5a" stroke-width="5"/><circle cx="4" cy="4" r="3" fill="#fff" stroke="#e05050" stroke-width="1.2"/><circle cx="19" cy="4" r="3" fill="#fff" stroke="#e05050" stroke-width="1.2"/><circle cx="4" cy="19" r="3" fill="#fff" stroke="#e05050" stroke-width="1.2"/><circle cx="19" cy="19" r="3" fill="#fff" stroke="#e05050" stroke-width="1.2"/></svg><div class="s" style="left:874.5px;top:1065.7px;font-size:16px">Help</div></div></body></html>
